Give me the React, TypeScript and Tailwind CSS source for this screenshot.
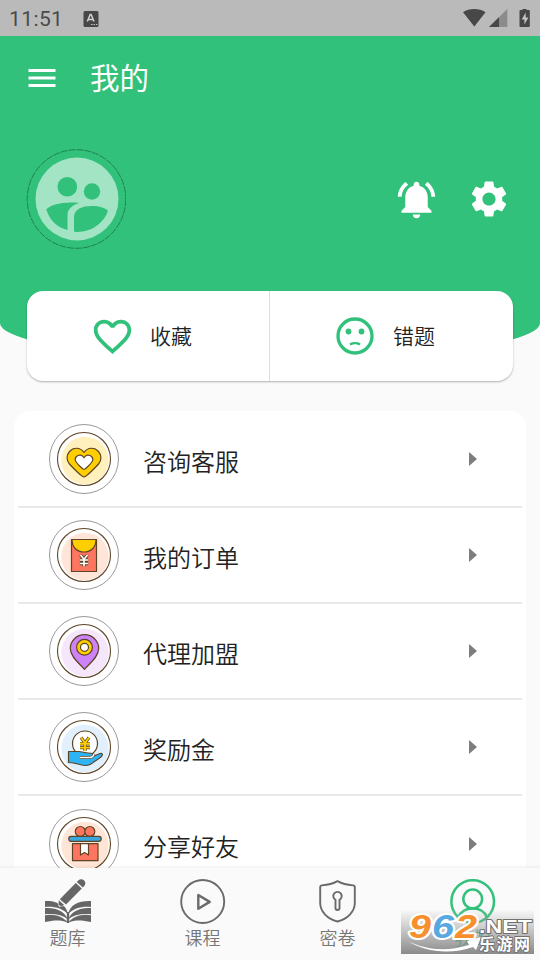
import React from 'react';
import { MdMenu, MdNotificationsActive, MdSettings, MdFavoriteBorder } from 'react-icons/md';

const GREEN = '#31c17b';
const LINE = '#5c4426';

interface BadgeProps {
  tint: string;
  children: React.ReactNode;
}

const Badge: React.FC<BadgeProps> = ({ tint, children }) => (
  <svg width="70" height="70" viewBox="0 0 70 70" className="shrink-0">
    <circle cx="35" cy="35" r="34.5" fill="#fff" stroke="#8d8d8d" strokeWidth="0.9" />
    <circle cx="36" cy="36.5" r="23.7" fill={tint} />
    <circle cx="35" cy="35" r="26.5" fill="none" stroke={LINE} strokeWidth="1.1" />
    <g stroke={LINE} strokeWidth="1.2" strokeLinejoin="round">{children}</g>
  </svg>
);

const HeartBadge = () => (
  <Badge tint="#fff0bd">
    <path fill="#ffce00" d="M35 53c-2 0-11-9-14.500-13-3.500-4-3-9 0-12.500 4-4.500 10.500-4.500 14.500 1 4-5.500 10.500-5.500 14.500-1 3 3.500 3.500 8.500 0 12.500C46 44 37 53 35 53z" />
    <path fill="#fff" d="M35 45.500c-1 0-5.500-4.500-7.500-7-2-2.500-1.500-4.500 0-6 2.500-2.500 6-1.500 7.500 1.200 1.500-2.700 5-3.700 7.500-1.200 1.500 1.500 2 3.500 0 6-2 2.500-6.500 7-7.500 7z" />
  </Badge>
);

const OrderBadge = () => (
  <Badge tint="#ffe5d8">
    <path fill="#ff7660" d="M22.500 19.500h25v32h-25z" />
    <path fill="#ffce00" d="M23 19.500h24c0 8-5 12.500-12 12.500s-12-4.500-12-12.500z" />
    <path fill="none" strokeWidth="3.400" d="M31.500 35l3.500 4.200 3.500-4.200M30.800 40h8.400M30.800 43.500h8.400M35 39v7.500" />
    <path fill="none" stroke="#fff" strokeWidth="1.600" d="M31.500 35l3.500 4.200 3.500-4.200M30.800 40h8.400M30.800 43.500h8.400M35 39v7.500" />
  </Badge>
);

const PinBadge = () => (
  <Badge tint="#f6e6fc">
    <path fill="#cd82f7" d="M35.500 53.300C31 48 21.300 41 21.300 32.500a14.200 13.800 0 0 1 28.400 0c0 8.500-9.700 15.500-14.200 20.800z" />
    <circle cx="35.500" cy="31.300" r="7.900" fill="#ffce00" />
    <circle cx="35.500" cy="31.300" r="4" fill="#fff" />
  </Badge>
);

const RewardBadge = () => (
  <Badge tint="#e1f0fc">
    <circle cx="36" cy="31.500" r="12.500" fill="#fff" />
    <path fill="none" strokeWidth="3.200" d="M32 25.500l4 5.500 4-5.500M31 31.800h10M31 35.600h10M36 31v8" />
    <path fill="none" stroke="#ffce00" strokeWidth="1.900" d="M32 25.500l4 5.500 4-5.500M31 31.800h10M31 35.600h10M36 31v8" />
    <path fill="#2db4f5" d="M19.500 39.500h10c4 0 6 1.500 10 1.500 3 0 6 .5 5.500 3l6-2.500c2-.8 3 1 1.800 2.500-1.300 2-5 4-7.300 5.500C43 51.500 41 53.800 37 53.500c-6-.3-9-2.500-17.500-3z" />
    <path fill="none" strokeWidth="2.800" d="M31 45.500h9.500c2.500 0 4-1 4.500-3.500" />
    <path fill="none" stroke="#fff" strokeWidth="1.400" d="M31 45.500h9.500c2.500 0 4-1 4.500-3.500" />
  </Badge>
);

const GiftBadge = () => (
  <Badge tint="#ffe5d5">
    <circle cx="31.300" cy="22.500" r="5" fill="#ff7660" />
    <circle cx="40.800" cy="22.500" r="5" fill="#ff7660" />
    <rect x="19.800" y="27.300" width="32.400" height="5" rx="2.200" fill="#3aa6dc" />
    <path fill="#ff7660" d="M23.500 34.700h25.500v17h-25.500z" />
    <path fill="#fff" d="M31.500 34.700h8v11.300l-4-2.500-4 2.500z" />
  </Badge>
);

const MENU = [
  { label: '咨询客服', icon: <HeartBadge /> },
  { label: '我的订单', icon: <OrderBadge /> },
  { label: '代理加盟', icon: <PinBadge /> },
  { label: '奖励金', icon: <RewardBadge /> },
  { label: '分享好友', icon: <GiftBadge /> },
];

const BookIcon = () => (
  <svg width="46" height="46" viewBox="0 0 46 46" fill="#666">
    <path d="M33.500 1.300c1.500-1.400 3.700-1.600 5.400-.1 1.800 1.600 1.900 4 .5 5.600l-1.600 1.600-6-5.400zM30.800 4l6 5.400L21 25.600l-6.200-5.400zM13.800 21.300l5.400 4.700-3.200 1.300-2.500-1.500z" />
    <path d="M0 22c5.500-.2 9.500.4 12.500 2l1.500 3.800 5-.8c2 2 3.300 4.800 4 8.600C18 29.500 10 27.300 0 28z" />
    <path d="M46 22c-12.500-.4-21 3.500-23 13.600 5-6.100 13-8.300 23-7.600z" />
    <path d="M0 29c11-.8 19.500 3 23 11.500C17.500 36 9.500 34.300 0 35.300zM46 29c-11-.8-19.500 3-23 11.500 5.500-4.500 13.500-6.200 23-5.200z" />
    <path d="M0 36.300c9-1.700 17.500 1 23 7.200-7-2.700-14-2.600-23-.4zM46 36.300c-9-1.700-17.500 1-23 7.200 7-2.700 14-2.600 23-.4z" />
    <path d="M21.800 33h2.400v11h-2.400z" />
  </svg>
);

const PlayIcon = () => (
  <svg width="46" height="46" viewBox="0 0 46 46" fill="none" stroke="#6a6a6a" strokeWidth="1.900">
    <circle cx="22.700" cy="22.500" r="21.500" />
    <path d="M18.300 16v13.800l11.400-6.900z" strokeWidth="2.400" strokeLinejoin="round" />
  </svg>
);

const ShieldIcon = () => (
  <svg width="46" height="46" viewBox="0 0 46 46" fill="none" stroke="#6a6a6a" strokeWidth="1.900" strokeLinejoin="round">
    <path d="M22.500 2.200c4.500 2.500 10 3.800 15.500 4.200 1.200.1 1.800.7 1.800 1.900v16c0 8.200-7.300 15.700-17.300 18.200-10-2.500-17.300-10-17.300-18.200v-16c0-1.200.6-1.800 1.800-1.900 5.500-.4 11-1.700 15.500-4.200z" />
    <path d="M20.500 20.800a4.200 4.200 0 1 1 4 0v8.200a2 2 0 0 1-4 0z" />
  </svg>
);

const UserIcon = () => (
  <svg width="46" height="46" viewBox="0 0 46 46" fill="none" stroke={GREEN} strokeWidth="2.500">
    <circle cx="22.700" cy="22.500" r="21.300" />
    <circle cx="22.700" cy="20" r="9.400" />
    <path d="M8.200 38.500c2.500-6 8-9 14.500-9s12 3 14.500 9" />
  </svg>
);

const TABS = [
  { label: '题库', icon: <BookIcon />, active: false },
  { label: '课程', icon: <PlayIcon />, active: false },
  { label: '密卷', icon: <ShieldIcon />, active: false },
  { label: '我的', icon: <UserIcon />, active: true },
];

const StatusBar = () => (
  <div className="h-9 shrink-0 bg-[#bababa] flex items-center pt-px pl-[9px] pr-2.5 text-[#4a4a4a]">
    <span className="mt-px font-[Roboto] font-normal text-[21px] leading-[35px] tracking-[0.4px]">11:51</span>
    <svg width="16" height="16" viewBox="0 0 16 16" className="ml-5">
      <rect x="0.500" width="15" height="16" rx="1.500" fill="#474747" />
      <path d="M4.300 10.500L7.200 3.500h.9l2.900 7M5.300 8.500H10" fill="none" stroke="#d2d2d2" strokeWidth="1.500" />
      <path d="M8 13.500h1.500M10.500 13.500H12M13 13.500h1.300" stroke="#c8c8c8" strokeWidth="1.200" />
    </svg>
    <svg width="70" height="20" viewBox="0 0 70 20" className="ml-auto" fill="#474747">
      <path d="M3 3.200c6-4.200 16.500-4.200 22.500 0L14.300 17.500z" />
      <path d="M47.300 0v18H29z" fill="#8b8b8b" />
      <path d="M39 8.200V18H29z" />
      <path d="M62.500-.5h4v1.600h2.300c.7 0 1 .4 1 1V17c0 .6-.4 1-1 1h-8.300c-.7 0-1-.4-1-1V2.100c0-.6.4-1 1-1h2z" />
      <path d="M65.700 3.500l-4 7h2.700v5l4-7h-2.700z" fill="#c4c4c4" />
    </svg>
  </div>
);

const Avatar = () => (
  <svg width="100" height="100" viewBox="0 0 100 100">
    <circle cx="50.500" cy="50" r="49.300" fill="none" stroke="#1d7a4b" strokeWidth="0.900" strokeDasharray="7 1" />
    <circle cx="51" cy="50" r="41.500" fill="#a2e4c3" />
    <g fill={GREEN}>
      <circle cx="41.300" cy="37.800" r="9.800" />
      <circle cx="66" cy="42.500" r="8.200" />
      <path d="M20.300 60.500c4-4.800 17-8.300 33.200-6.500-7 1.800-12 6-12 12V81C31 78.500 23.500 71 20.300 60.500z" />
      <path d="M48 82.800V68.500C48 60 56 57 66 57c7 0 13 1.800 16 4.800-4.500 13-18 22.500-34 21z" />
    </g>
  </svg>
);

const SadFace = () => (
  <svg width="38" height="38" viewBox="0 0 38 38" fill={GREEN}>
    <circle cx="19" cy="19" r="17" fill="none" stroke={GREEN} strokeWidth="3.300" />
    <circle cx="12.500" cy="14.500" r="2.900" />
    <circle cx="25.500" cy="14.500" r="2.900" />
    <path d="M14 27.500c2.800-1.700 7.200-1.700 10 0" fill="none" stroke={GREEN} strokeWidth="2.600" />
  </svg>
);

const Watermark = () => (
  <div className="absolute left-[401px] top-[910px] w-[133px] h-11 bg-linear-to-b from-[#e8e8e8]/10 to-[#858585]/95">
    <svg width="133" height="44" viewBox="0 0 133 44" className="overflow-visible" fontWeight="bold" fontFamily="'Liberation Sans', 'Noto Sans CJK SC', sans-serif">
      <g fontSize="34" fontStyle="italic" strokeLinejoin="round">
        <g stroke="#fff" strokeWidth="4" paintOrder="stroke">
          <text x="8" y="28" textLength="22" lengthAdjust="spacingAndGlyphs" fill="#f7902c">9</text>
          <text x="31" y="28" textLength="22" lengthAdjust="spacingAndGlyphs" fill="#5aa8e0">6</text>
          <text x="54" y="28" textLength="22" lengthAdjust="spacingAndGlyphs" fill="#f7902c">2</text>
        </g>
      </g>
      <path d="M7 31c18 9 38 11 61 4l-2-4 14-4-5 13-3-3C49 45 24 42 7 31z" fill="#fff" />
      <g fill="#fff" stroke="#707070" strokeWidth="1.800" paintOrder="stroke" strokeLinejoin="round">
        <text x="78" y="22.500" fontSize="18" textLength="53" lengthAdjust="spacingAndGlyphs">.NET</text>
        <text x="78" y="40" fontSize="16" textLength="51">乐游网</text>
      </g>
    </svg>
  </div>
);

const App: React.FC = () => {
  return (
    <div className="relative w-[540px] h-[960px] overflow-hidden flex flex-col bg-[#fafafa] font-['Noto_Sans_CJK_SC',sans-serif] font-[350]">
      <StatusBar />

      <header className="h-[324px] shrink-0 bg-[#31c17b] text-white rounded-b-[50%_37px]">
        <div className="h-[84px] flex items-center pl-6">
          <MdMenu size={36} />
          <h1 className="ml-[30px] -mt-1 text-[29.500px] leading-[80px] font-normal">我的</h1>
        </div>
        <div className="mt-[29px] pl-[26px] pr-[29px] flex items-center">
          <Avatar />
          <MdNotificationsActive size={45} className="ml-auto" />
          <MdSettings size={44} className="ml-7" />
        </div>
      </header>

      <div className="relative -mt-[69px] mx-[27px] h-[90px] shrink-0 flex rounded-2xl bg-white shadow-[0_1px_2px_rgba(0,0,0,0.3)] text-[21px] text-[#222]">
        <div className="w-[243px] flex items-center pl-[63px] border-r border-[#dedede]">
          <MdFavoriteBorder size={45} color={GREEN} />
          <span className="ml-[15px]">收藏</span>
        </div>
        <div className="flex-1 flex items-center pl-[66px]">
          <SadFace />
          <span className="ml-[19px]">错题</span>
        </div>
      </div>

      <main className="mt-[30px] mx-3.5 h-[457px] shrink-0 overflow-hidden rounded-t-2xl bg-white px-1 pt-px">
        {MENU.map((item) => (
          <div key={item.label} className="h-24 flex items-center pl-[31px] pr-[45px] border-b-2 border-[#e9e9e9] last:pt-0.5">
            {item.icon}
            <span className="ml-6 mt-[3px] text-2xl text-[#222]">{item.label}</span>
            <svg width="8" height="14" viewBox="0 0 8 14" className="ml-auto">
              <path d="M0 0v14l8-7z" fill="#7d7d7d" />
            </svg>
          </div>
        ))}
      </main>

      <nav className="relative flex-1 flex bg-[#fafafa] shadow-[0_-1px_3px_rgba(0,0,0,0.07)]">
        {TABS.map((tab) => (
          <div key={tab.label} className="flex-1 flex flex-col items-center pt-[11px]">
            {tab.icon}
            <span className={tab.active ? 'text-lg leading-[25px] text-[#31c17b]' : 'text-lg leading-[25px] text-[#777]'}>
              {tab.label}
            </span>
          </div>
        ))}
      </nav>

      <Watermark />
    </div>
  );
};

export default App;
